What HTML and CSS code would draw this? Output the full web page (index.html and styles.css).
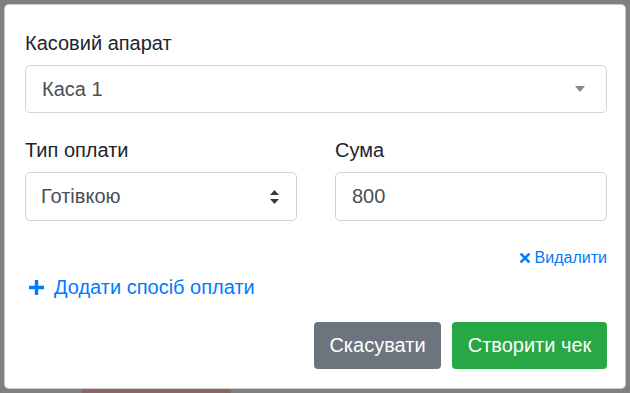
FILE: index.html
```html
<!DOCTYPE html>
<html lang="uk">
<head>
    <meta charset="UTF-8">
    <title>Створити чек</title>
    <link rel="stylesheet" href="styles.css">
</head>
<body>
<div class="modal">
    <div class="modal-body">
        <label class="field-label">Касовий апарат</label>
        <div class="select2">
            <span class="select2-text">Каса 1</span>
            <span class="select2-caret"></span>
        </div>

        <div class="pay-row">
            <div class="pay-col">
                <label class="field-label">Тип оплати</label>
                <div class="custom-select">
                    <span>Готівкою</span>
                    <svg class="updown" width="9" height="14" viewBox="0 0 9 14">
                        <path d="M4.5 0 L9 5 H0 Z" fill="#343a40"/>
                        <path d="M4.5 14 L9 9 H0 Z" fill="#343a40"/>
                    </svg>
                </div>
            </div>
            <div class="pay-col">
                <label class="field-label">Сума</label>
                <div class="form-control">800</div>
            </div>
        </div>

        <div class="remove-row">
            <a class="remove-link" href="#">
                <svg width="10" height="10" viewBox="0 0 10 10">
                    <path d="M1.5 1.5 L8.5 8.5 M8.5 1.5 L1.5 8.5" stroke="#007bff" stroke-width="2.6" stroke-linecap="square"/>
                </svg>
                Видалити
            </a>
        </div>

        <a class="add-link" href="#">
            <svg width="17" height="17" viewBox="0 0 17 17">
                <path d="M8.5 1 V16 M1 8.5 H16" stroke="#007bff" stroke-width="3.4"/>
            </svg>
            Додати спосіб оплати
        </a>
    </div>
    <div class="modal-footer">
        <button class="btn btn-secondary">Скасувати</button>
        <button class="btn btn-success">Створити чек</button>
    </div>
</div>
<div class="under-strip"></div>
</body>
</html>
```

FILE: styles.css
```css
body { margin: 0; padding: 4px 4px 0; background: #808080; font-family: "Liberation Sans", Arial, sans-serif; color: #212529; font-size: 20px; height: 393px; box-sizing: border-box; overflow: hidden; }
.modal { width: 622px; box-sizing: border-box; background: #fff; border: 1px solid rgba(0,0,0,.2); border-radius: 5px; height: 385px; }
.modal-body { padding: 23px 18px 0 20px; }
.field-label { display: block; line-height: 30px; margin-bottom: 7px; }
.select2 { height: 48px; box-sizing: border-box; border: 1px solid #ced4da; border-radius: 5px; display: flex; align-items: center; justify-content: space-between; padding: 0 21px 0 16px; color: #495057; }
.select2-caret { width: 0; height: 0; border-left: 5px solid transparent; border-right: 5px solid transparent; border-top: 6px solid #888; }
.pay-row { display: grid; grid-template-columns: 1fr 1fr; column-gap: 38px; margin-top: 22px; }
.custom-select, .form-control { height: 49px; box-sizing: border-box; border: 1px solid #ced4da; border-radius: 5px; display: flex; align-items: center; color: #495057; }
.custom-select { justify-content: space-between; padding: 0 17px 0 15px; }
.form-control { padding: 0 16px; }
.remove-row { display: flex; justify-content: flex-end; margin-top: 27px; }
.remove-link { color: #007bff; text-decoration: none; font-size: 16px; display: flex; align-items: center; gap: 5px; line-height: 20px; }
.add-link { color: #007bff; text-decoration: none; display: flex; width: fit-content; align-items: center; gap: 9px; margin-top: 7px; margin-left: 3px; line-height: 24px; }
.modal-footer { display: flex; justify-content: flex-end; gap: 11px; padding: 23px 18px 0 20px; }
.btn { font-family: inherit; font-size: 20px; color: #fff; border: none; border-radius: 4px; height: 47px; padding: 0 12px; }
.btn-secondary { background: #6c757d; width: 127px; }
.btn-success { background: #28a745; width: 155px; }
.under-strip { width: 149px; height: 5px; margin: 0 0 0 78px; background: #8a6767; }
```
